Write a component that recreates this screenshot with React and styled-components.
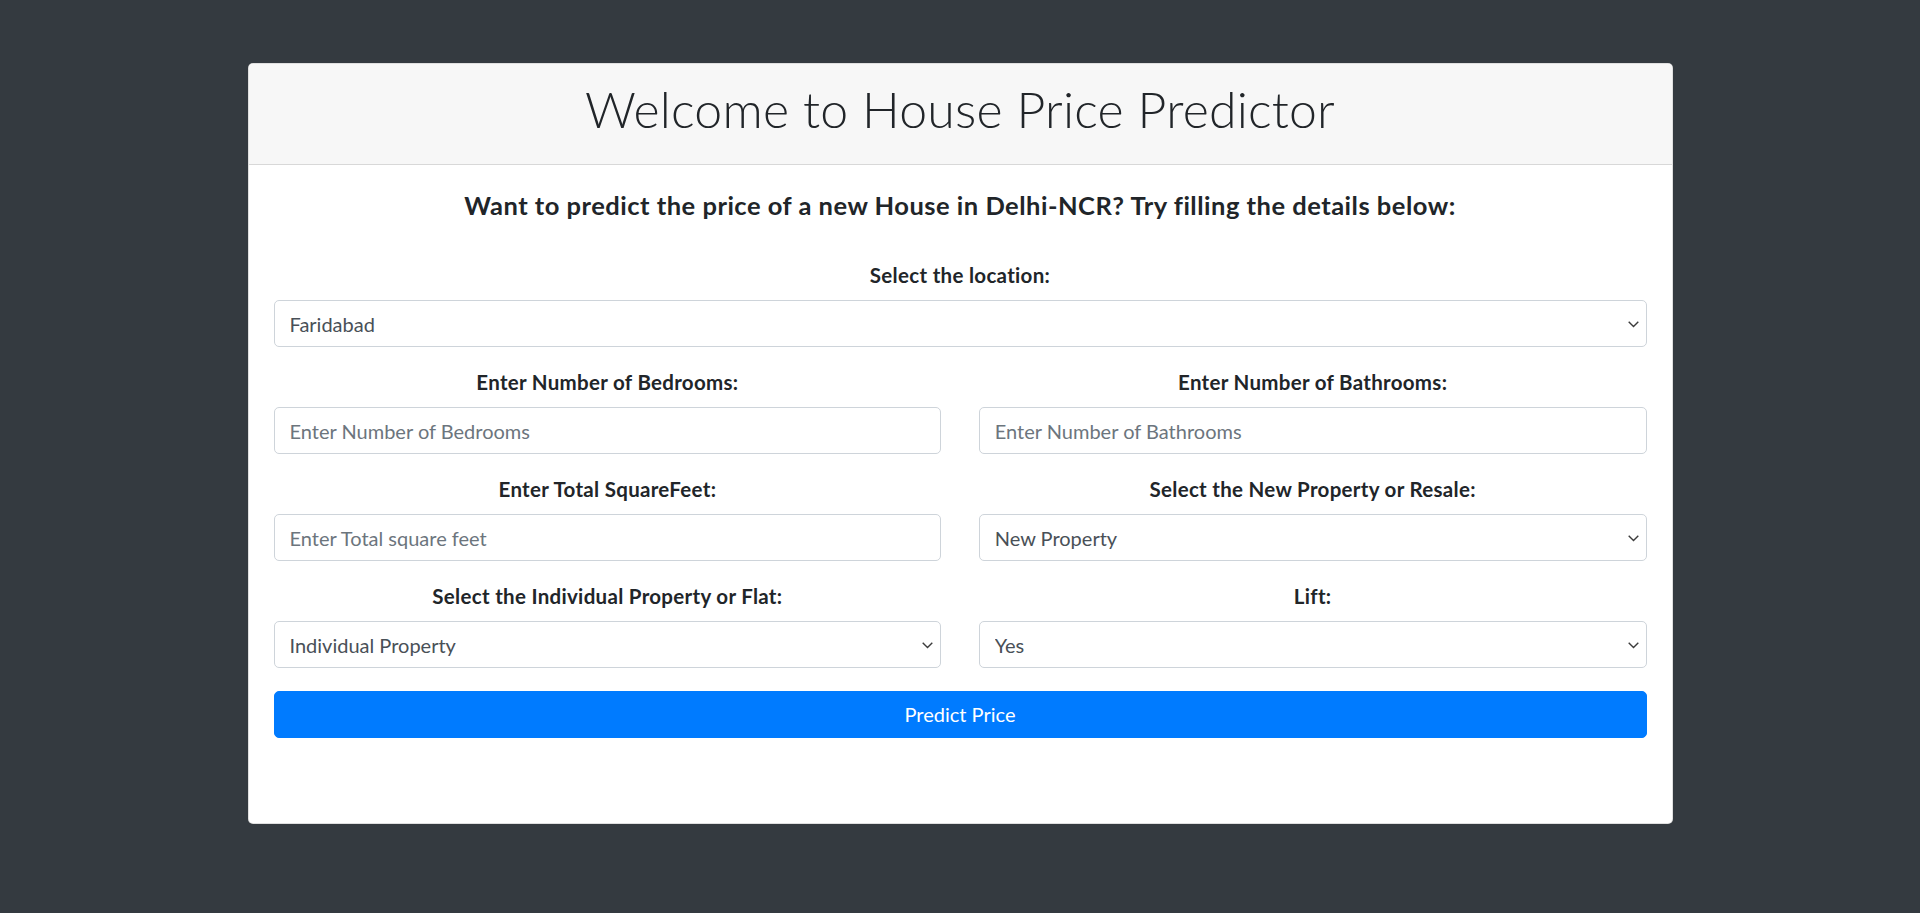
import styled, { createGlobalStyle } from "styled-components";

const GlobalStyle = createGlobalStyle`
  * {
    box-sizing: border-box;
  }
  body {
    margin: 0;
    background-color: #343a40;
    font-family: Lato, "Noto Sans", Arial, sans-serif;
    color: #212529;
  }
`;

const Page = styled.div`
  min-height: 913px;
  padding-top: 63px;
`;

const Card = styled.div`
  width: 1425px;
  margin: 0 auto;
  background-color: #fff;
  border: 1.25px solid rgba(0, 0, 0, 0.125);
  border-radius: 5px;
  overflow: hidden;
`;

const CardHeader = styled.div`
  padding: 15px 25px;
  background-color: #f7f7f7;
  border-bottom: 1.25px solid rgba(0, 0, 0, 0.125);
`;

const Title = styled.h1`
  margin: 0 0 10px;
  font-size: 50px;
  line-height: 60px;
  font-weight: 300;
  letter-spacing: 0.2px;
  text-align: center;
`;

const CardBody = styled.div`
  padding: 25px 25px 85px;
`;

const Subtitle = styled.h5`
  margin: 0;
  font-size: 25.5px;
  line-height: 30px;
  font-weight: 700;
  letter-spacing: 0.5px;
  text-align: center;
`;

const Form = styled.form`
  display: flex;
  flex-direction: column;
  gap: 20px;
  margin-top: 40px;
`;

const Row = styled.div`
  display: grid;
  grid-template-columns: 1fr 1fr;
  column-gap: 37.5px;
`;

const Field = styled.div`
  display: flex;
  flex-direction: column;
  gap: 10px;
`;

const Label = styled.label`
  font-size: 20.5px;
  line-height: 30px;
  font-weight: 700;
  letter-spacing: 0.3px;
  text-align: center;
`;

const Control = styled.input`
  width: 100%;
  height: 47px;
  padding: 7.5px 15px;
  font-family: inherit;
  font-size: 20px;
  line-height: 30px;
  color: #495057;
  background-color: #fff;
  border: 1.25px solid #ced4da;
  border-radius: 5px;
  outline: none;

  &::placeholder {
    color: #6c757d;
  }
`;

const SelectWrap = styled.div`
  position: relative;
`;

const Select = styled(Control).attrs({ as: "select" })`
  appearance: none;
  padding-right: 40px;
`;

const Chevron = styled.svg`
  position: absolute;
  right: 8px;
  top: 50%;
  width: 11px;
  height: 7px;
  margin-top: -3px;
  pointer-events: none;
`;

const Button = styled.button`
  width: 100%;
  height: 47px;
  margin-top: 2.5px;
  font-family: inherit;
  font-size: 20px;
  line-height: 30px;
  color: #fff;
  background-color: #007bff;
  border: 1.25px solid #007bff;
  border-radius: 5px;
  cursor: pointer;
`;

function SelectField({ label, options }) {
  return (
    <Field>
      <Label>{label}</Label>
      <SelectWrap>
        <Select defaultValue={options[0]}>
          {options.map((o) => (
            <option key={o}>{o}</option>
          ))}
        </Select>
        <Chevron viewBox="0 0 11 7">
          <polyline points="0.7,0.7 5.5,5.5 10.3,0.7" fill="none" stroke="#3c3c3c" strokeWidth="1.4" />
        </Chevron>
      </SelectWrap>
    </Field>
  );
}

function InputField({ label, placeholder }) {
  return (
    <Field>
      <Label>{label}</Label>
      <Control type="text" placeholder={placeholder} />
    </Field>
  );
}

export default function App() {
  return (
    <Page>
      <GlobalStyle />
      <Card>
        <CardHeader>
          <Title>Welcome to House Price Predictor</Title>
        </CardHeader>
        <CardBody>
          <Subtitle>Want to predict the price of a new House in Delhi-NCR? Try filling the details below:</Subtitle>
          <Form onSubmit={(e) => e.preventDefault()}>
            <SelectField
              label="Select the location:"
              options={["Faridabad", "Gurgaon", "Noida", "Greater Noida", "Delhi", "Ghaziabad"]}
            />
            <Row>
              <InputField label="Enter Number of Bedrooms:" placeholder="Enter Number of Bedrooms" />
              <InputField label="Enter Number of Bathrooms:" placeholder="Enter Number of Bathrooms" />
            </Row>
            <Row>
              <InputField label="Enter Total SquareFeet:" placeholder="Enter Total square feet" />
              <SelectField label="Select the New Property or Resale:" options={["New Property", "Resale"]} />
            </Row>
            <Row>
              <SelectField label="Select the Individual Property or Flat:" options={["Individual Property", "Flat"]} />
              <SelectField label="Lift:" options={["Yes", "No"]} />
            </Row>
            <Button type="submit">Predict Price</Button>
          </Form>
        </CardBody>
      </Card>
    </Page>
  );
}
